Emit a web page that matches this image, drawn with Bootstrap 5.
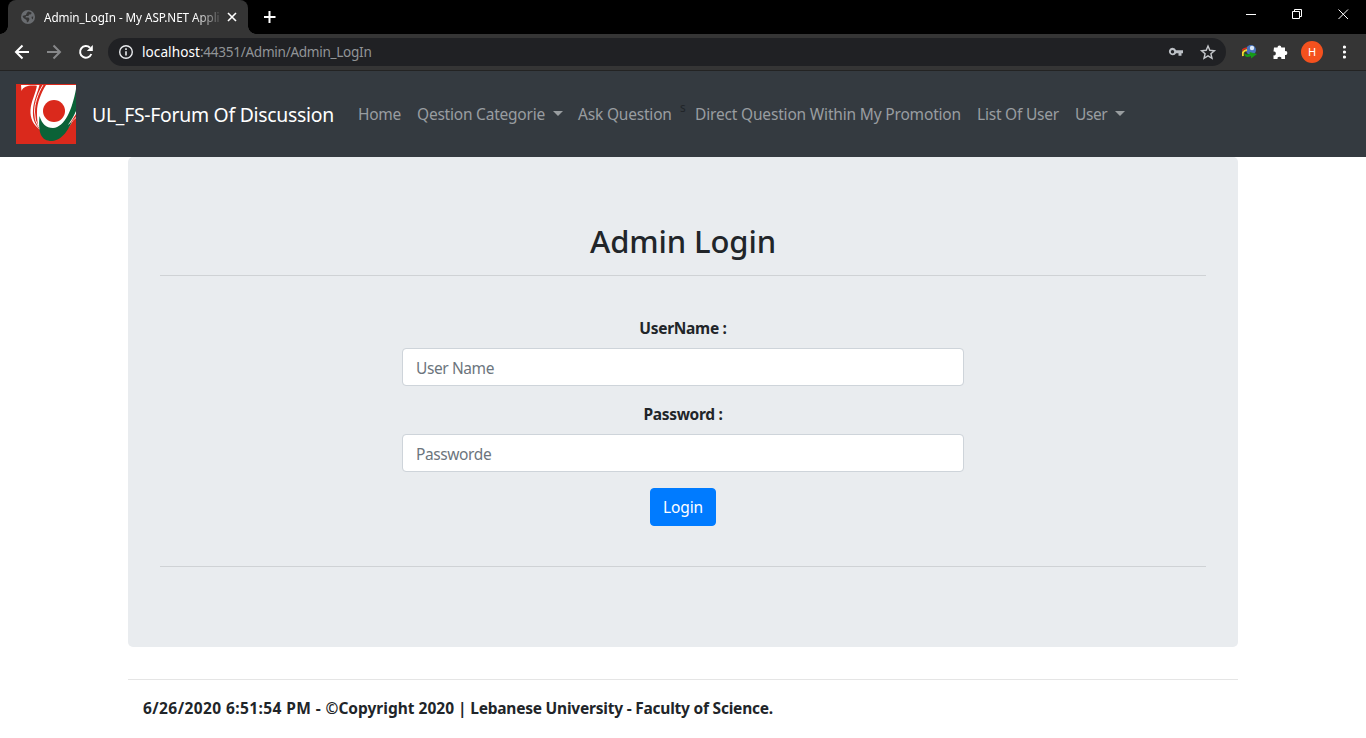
<!DOCTYPE html>
<html lang="en">
<head>
<meta charset="utf-8">
<meta name="viewport" content="width=device-width, initial-scale=1">
<title>Admin_LogIn - My ASP.NET Application</title>
<link href="https://cdn.jsdelivr.net/npm/bootstrap@5.3.0/dist/css/bootstrap.min.css" rel="stylesheet">
<style>
  body { font-family: "Noto Sans", "Liberation Sans", sans-serif; font-size: 15.5px; line-height: 24px; color: #212529; height: 738px; overflow: hidden; }
  svg { display: block; flex: none; }
  .tab-strip { height: 34px; background: #000; padding-left: 8px; }
  .browser-tab { width: 240px; height: 34px; background: #353535; border-radius: 8px 8px 0 0; padding: 0 10px 0 12px; position: relative; }
  .browser-tab::before, .browser-tab::after { content: ""; position: absolute; bottom: 0; width: 8px; height: 8px; }
  .browser-tab::before { left: -8px; background: radial-gradient(circle at 0 0, #000 7.5px, #353535 8px); }
  .browser-tab::after { right: -8px; background: radial-gradient(circle at 100% 0, #000 7.5px, #353535 8px); }
  .tab-title { width: 178px; margin-left: 8px; font-size: 11.7px; letter-spacing: -.06px; color: #fff; white-space: nowrap; -webkit-mask-image: linear-gradient(90deg, #000 150px, transparent 180px); mask-image: linear-gradient(90deg, #000 150px, transparent 180px); }
  .toolbar { height: 37px; background: #353535; border-bottom: 1px solid #232323; padding: 0 0 1px 14px; }
  .omnibox { width: 1118px; height: 28px; border-radius: 14px; background: #202124; color: #919497; font-size: 13.6px; letter-spacing: -.3px; margin-left: 14px; padding: 0 9px 0 10px; }
  .omnibox b { font-weight: 400; color: #fff; letter-spacing: .06px; }
  .avatar { width: 22px; height: 22px; border-radius: 50%; background: #f4511e; color: #fff; font-size: 11px; line-height: 22px; margin-left: 13px; }
  .site-nav { height: 86px; background: #343a40; padding: 0 16px; letter-spacing: -.19px; }
  .site-nav .navbar-brand { width: 242px; margin: 0 16px; padding: 2px 0 0; font-size: 19.4px; line-height: 30px; color: #fff; letter-spacing: -.27px; white-space: nowrap; }
  .site-nav .nav-link { height: 40px; padding: 8px; white-space: nowrap; color: #999da0; }
  .site-nav .dropdown-toggle::after { margin-left: 8px; border-top-width: 5px; border-left-width: 5px; border-right-width: 5px; vertical-align: 4px; }
  .item-home { width: 59px; letter-spacing: -.28px; }
  .item-categories { width: 161px; letter-spacing: -.22px; }
  .item-ask { width: 110px; }
  .item-direct { width: 282px; letter-spacing: -.175px; }
  .item-list { width: 98px; letter-spacing: -.22px; }
  .item-user { letter-spacing: -.4px; }
  .stray { width: 7px; font-size: 12px; line-height: 28px; color: #212529; }
  .page { width: 1110px; margin: 0 auto; }
  .jumbo { height: 490px; background: #e9ecef; border-radius: 5px; padding: 64px 32px 0; }
  .rule { height: 1px; background: #cfd2d5; }
  .rule-footer { background: #e5e5e5; margin-top: 32px; }
  h2.title { font-size: 31px; line-height: 38px; margin: 0; padding: 1px 0 15px; font-weight: 500; letter-spacing: -.12px; }
  .login-form { width: 562px; margin: 0 auto; padding: 40px 0; }
  .login-form label, .foot { font-weight: 700; }
  .login-form label { display: block; margin-bottom: 8px; letter-spacing: -.3px; }
  .login-form .form-control { height: 38px; border: 1px solid #ced4da; border-radius: 4px; padding: 8px 13px 6px; font-size: 15.5px; letter-spacing: -.4px; }
  .login-form .form-control::placeholder { color: #6c757d; opacity: 1; }
  .login-form .btn { display: block; width: 66px; height: 38px; margin: 0 auto; padding: 1px 0 0; background: #007bff; border-color: #007bff; border-radius: 4px; font-size: 15.5px; letter-spacing: -.12px; }
  .foot { padding: 16px 15px; white-space: pre; }
  .foot .stamp { letter-spacing: .4px; }
  .foot .owner { letter-spacing: -.22px; }
</style>
</head>
<body>
<header>
  <div class="tab-strip d-flex">
    <div class="browser-tab d-flex align-items-center">
      <svg width="16" height="16" viewBox="0 0 16 16"><circle cx="8" cy="8" r="7" fill="#696c70"/><path d="M8 2.500c2 .2 3 .8 3.800 1.600L10.500 5.500 9 5.500 8.500 7H6L5.500 8.500H8.500L9.500 10 8.500 12.500 7 13.500 6.500 11 3.500 9 2.500 7 4 6.500 6 6 6.500 4.500ZM13.300 7.500 12.800 10.500 11.800 9.500 11.500 7.800Z" fill="#353535"/></svg>
      <div class="tab-title">Admin_LogIn - My ASP.NET Appli</div>
      <svg class="ms-auto" width="12" height="12" viewBox="0 0 12 12"><path d="M2 2l8 8M10 2l-8 8" stroke="#fff" stroke-width="1.600"/></svg>
    </div>
    <svg class="mt-2 ms-3" width="12" height="18" viewBox="0 0 12 18"><path d="M5.500 3v12M-.5 9h12" stroke="#fff" stroke-width="2"/></svg>
    <svg class="ms-auto" width="120" height="34" viewBox="0 0 120 34" fill="none" stroke="#fff"><path d="M0 14.500h10M46.500 11.500h7v7h-7zM48.500 11.500v-2h7v7h-2M92.500 9.500l9.500 9.500M102 9.500l-9.500 9.500"/></svg>
  </div>
  <div class="toolbar d-flex align-items-center">
    <svg width="80" height="20" viewBox="0 0 80 20" fill="none" stroke-width="2"><path d="M15 10H2.500M8.500 3.500L2 10l6.500 6.500" stroke="#fff"/><path d="M33 10h13M39.500 3.500L46 10l-6.500 6.500" stroke="#87888a"/><path d="M77.300 12A5.800 5.800 0 1 1 76 5.800" stroke="#fff"/><path d="M78.800 3v6h-6z" fill="#fff"/></svg>
    <div class="omnibox d-flex align-items-center">
      <svg width="16" height="16" viewBox="0 0 16 16"><circle cx="8" cy="8" r="6.300" fill="none" stroke="#e8eaed" stroke-width="1.400"/><path d="M8 7.200v4.300M8 4.300v1.700" stroke="#e8eaed" stroke-width="1.600"/></svg>
      <div class="ms-2"><b>localhost</b><span>:44351/Admin/Admin_LogIn</span></div>
      <svg class="ms-auto" width="49" height="20" viewBox="0 0 49 20"><path fill="#bdc1c6" fill-rule="evenodd" d="M4.500 5.700a3.800 3.800 0 0 1 3.600 2.600H15v3h-1.500v2.500h-3v-2.500H8.100A3.800 3.800 0 1 1 4.500 5.700ZM4.500 8a1.700 1.700 0 1 0 0 3.400A1.700 1.700 0 0 0 4.500 8Z"/><path d="M40 4l1.800 4.300 4.600.4-3.500 3 1.100 4.600-4-2.500-4 2.500 1.100-4.600-3.500-3 4.600-.4z" fill="none" stroke="#c5c8cc" stroke-width="1.400"/></svg>
    </div>
    <svg class="ms-3" width="18" height="16" viewBox="3 0 18 16"><circle cx="12" cy="6" r="5" fill="#4773bd"/><circle cx="13" cy="4" r="2.200" fill="#dce9f8"/><path d="M2.500 11Q1 5 8 4" fill="none" stroke="#d52b1e" stroke-width="1.600"/><path d="M4 12Q2.500 7 8 6" fill="none" stroke="#f4d82f" stroke-width="2"/><path d="M5 8C6 11 9 11 11 9.500L10.500 8 18 10 12 14.500V12C8 14 5 13 5 8Z" fill="#169a17"/></svg>
    <svg style="margin-left:12px" width="16" height="16" viewBox="0 0 16 16"><path d="M2 3.500h3.500a1.800 1.800 0 1 1 3.800 0H13v3.700a1.900 1.900 0 1 1 0 3.700V15H9.300a1.900 1.900 0 1 0-3.700 0H1.500v-3.700a1.900 1.900 0 1 0 0-3.700z" fill="#fff"/></svg>
    <div class="avatar text-center">H</div>
    <svg style="margin-left:20px" width="4" height="16" viewBox="0 0 4 16" fill="#fff"><circle cx="1.500" cy="3" r="1.600"/><circle cx="1.500" cy="8" r="1.600"/><circle cx="1.500" cy="13" r="1.600"/></svg>
  </div>
</header>

<nav class="site-nav d-flex align-items-center">
  <svg width="60" height="60" viewBox="0 0 60 60">
    <rect width="60" height="60" fill="#da291c"/>
    <path d="M5 1H22V2C14 1 8 1.500 5.500 7Z" fill="#fff"/>
    <path d="M21 1H60V31C54 43 49 50 38 52L25 46.500C17 41 14 34 14.500 26C15 17 20 9 21 1Z" fill="#fff"/>
    <path d="M23.500 1H30C25 9 21 19 21 28C21 38 22 41 23.500 45C18 39 16.500 34 17 26C17.500 17 21.500 9 23.500 1Z" fill="#da291c"/>
    <path d="M27 1C21.500 10 18.500 20 18.500 28Q18.500 37 22.500 43" fill="none" stroke="#fff" stroke-width=".9"/>
    <path d="M60 5V28C54 43 48 56 36 57C25 57 22 49 23.500 32C26 40 30 44 37 44C49 43 56 26 60 5Z" fill="#0b6237"/>
    <path d="M60 27C57 34 54 38 52 41L60 34Z" fill="#fff"/>
    <path d="M60 30L53.500 40L60 33Z" fill="#da291c"/>
    <circle cx="38" cy="27" r="11" fill="#da291c"/>
  </svg>
  <a class="navbar-brand">UL_FS-Forum Of Discussion</a>
  <div class="d-flex">
    <a class="nav-link item-home">Home</a>
    <a class="nav-link dropdown-toggle item-categories">Qestion Categorie</a>
    <a class="nav-link item-ask">Ask Question</a>
    <span class="stray">s</span>
    <a class="nav-link item-direct">Direct Question Within My Promotion</a>
    <a class="nav-link item-list">List Of User</a>
    <a class="nav-link dropdown-toggle item-user">User</a>
  </div>
</nav>

<main class="page">
  <section class="jumbo text-center">
    <h2 class="title">Admin Login</h2>
    <div class="rule"></div>
    <form class="login-form">
      <label>UserName :</label>
      <input class="form-control mb-3" placeholder="User Name">
      <label>Password :</label>
      <input class="form-control mb-3" placeholder="Passworde">
      <button class="btn btn-primary" type="button">Login</button>
    </form>
    <div class="rule"></div>
  </section>
  <div class="rule rule-footer"></div>
  <footer class="foot"><span class="stamp">6/26/2020 6:51:54 PM - </span>©Copyright 2020 <span class="owner">| Lebanese University - Faculty of Science.</span></footer>
</main>
<script src="https://cdn.jsdelivr.net/npm/bootstrap@5.3.0/dist/js/bootstrap.bundle.min.js"></script>
</body>
</html>
